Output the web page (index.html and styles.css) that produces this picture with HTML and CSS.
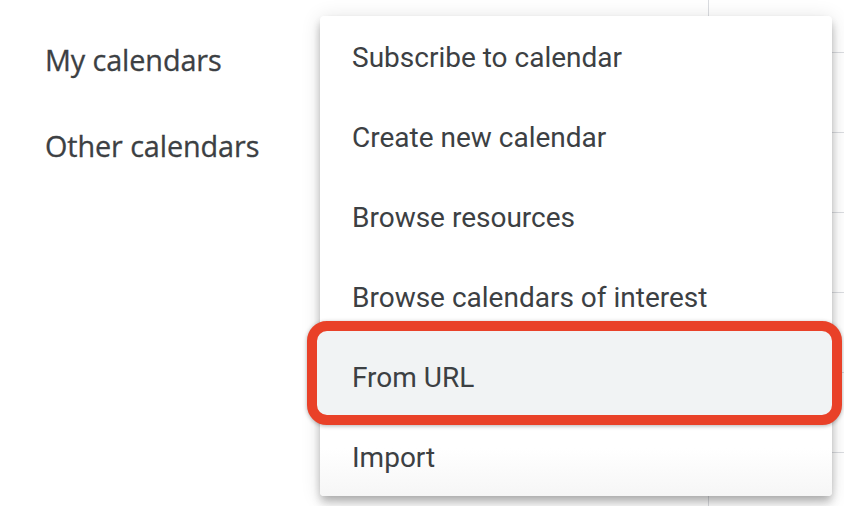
FILE: index.html
```html
<!DOCTYPE html>
<html lang="en">
<head>
<meta charset="utf-8">
<title>Add calendar menu</title>
<link rel="stylesheet" href="styles.css">
</head>
<body>
<div class="page">
  <aside class="sidebar">
    <div class="section-title">My calendars</div>
    <div class="section-title">Other calendars</div>
  </aside>
  <div class="grid">
    <div class="cell first"></div>
    <div class="cell"></div>
    <div class="cell"></div>
    <div class="cell"></div>
    <div class="cell"></div>
    <div class="cell"></div>
    <div class="cell"></div>
  </div>
  <ul class="menu">
    <li class="item">Subscribe to calendar</li>
    <li class="item">Create new calendar</li>
    <li class="item">Browse resources</li>
    <li class="item">Browse calendars of interest</li>
    <li class="item highlighted"><span class="label">From URL</span></li>
    <li class="item last">Import</li>
  </ul>
</div>
</body>
</html>
```
FILE: styles.css
```css
* { box-sizing: border-box; }
html, body { margin: 0; padding: 0; background: #fff; }
body { width: 844px; height: 506px; overflow: hidden; }

.page {
  position: relative;
  display: flex;
  width: 844px;
  height: 506px;
  overflow: hidden;
  color: #3c4043;
}

.sidebar {
  width: 708px;
  flex: none;
  padding: 38px 0 0 45px;
  display: flex;
  flex-direction: column;
  gap: 42px;
}

.section-title {
  font-family: "Open Sans", "Noto Sans", sans-serif;
  font-weight: 500;
  font-size: 28.8px;
  line-height: 44px;
  letter-spacing: -0.1px;
  -webkit-text-stroke: 0.3px #3c4043;
}

.grid {
  flex: 1;
  border-left: 1px solid #dadce0;
  display: flex;
  flex-direction: column;
  overflow: hidden;
}
.cell {
  flex: none;
  height: 80px;
  border-bottom: 1px solid #dadce0;
}
.cell.first { height: 53px; }

.menu {
  position: absolute;
  left: 320px;
  top: 16px;
  width: 512px;
  margin: 0;
  padding: 0;
  list-style: none;
  background: #fff;
  border-radius: 4px;
  box-shadow: 0 8px 10px 0 rgba(0,0,0,.14), 0 2px 20px 0 rgba(0,0,0,.12), 0 4px 8px -2px rgba(0,0,0,.2);
  font-family: Roboto, "Liberation Sans", sans-serif;
  font-size: 28px;
}

.item {
  position: relative;
  height: 80px;
  line-height: 80px;
  padding: 2px 0 0 32px;
  white-space: nowrap;
}
.item.last {
  border-radius: 0 0 4px 4px;
  background: linear-gradient(#fff 0%, #fff 40%, #f6f6f6 100%);
}

.item.highlighted { z-index: 1; }
.item.highlighted::before {
  content: "";
  position: absolute;
  left: -13px;
  right: -10px;
  top: -15px;
  bottom: -9px;
  background: #f1f3f4;
  border: 10px solid #e94128;
  border-radius: 20px;
  box-shadow: 0 1px 4px rgba(0,0,0,.3);
}
.item.highlighted .label { position: relative; }
```
